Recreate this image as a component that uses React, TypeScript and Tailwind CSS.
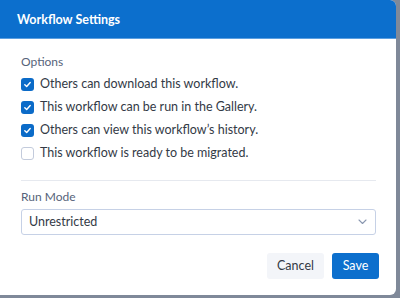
import React from "react";

const Check = ({ checked }: { checked: boolean }) =>
  checked ? (
    <span className="w-[13px] h-[13px] rounded-[3px] bg-[#0b6bc8] flex items-center justify-center shrink-0">
      <svg width="9" height="9" viewBox="0 0 10 10" fill="none">
        <path d="M2 5.2 L4.1 7.2 L8 2.8" stroke="white" strokeWidth="1.6" strokeLinecap="round" strokeLinejoin="round" />
      </svg>
    </span>
  ) : (
    <span className="w-[13px] h-[13px] rounded-[3px] border border-[#c3cbdc] bg-white shrink-0" />
  );

export default function App() {
  const items: [string, boolean][] = [
    ["Others can download this workflow.", true],
    ["This workflow can be run in the Gallery.", true],
    ["Others can view this workflow\u2019s history.", true],
    ["This workflow is ready to be migrated.", false],
  ];
  return (
    <div className="w-[400px] h-[298px] bg-[#7f8999] overflow-hidden" style={{ fontFamily: "Lato, 'Noto Sans', sans-serif" }}>
      <div className="w-[396px] h-[295px] bg-white rounded-r-[6px] overflow-hidden flex flex-col">
        <div className="h-[39px] bg-[#0c6fcd] border-b border-[#5c9fe0] flex items-center pl-[17px] pt-[2px] shrink-0">
          <span className="text-white font-bold text-[12.5px]">Workflow Settings</span>
        </div>
        <div className="px-[21px] pt-[14px] pr-[20px] flex flex-col">
          <div className="text-[#56637a] text-[12px] leading-[18px]">Options</div>
          <div className="flex flex-col gap-[5px] mt-[4px]">
            {items.map(([t, c]) => (
              <div key={t} className="flex items-center gap-[6px] h-[18px]">
                <Check checked={c} />
                <span className="text-[#333a46] text-[12.5px] leading-[18px]">{t}</span>
              </div>
            ))}
          </div>
          <div className="h-px bg-[#e6e9ef] mt-[18px]" />
          <div className="text-[#56637a] text-[12px] leading-[18px] mt-[7px]">Run Mode</div>
          <div className="mt-[3px] h-[26px] border border-[#c6d1e6] rounded-[3px] flex items-center justify-between pl-[7px] pr-[8px]">
            <span className="text-[#333a46] text-[12.5px]">Unrestricted</span>
            <svg width="9" height="6" viewBox="0 0 9 6" fill="none">
              <path d="M1 1 L4.5 4.5 L8 1" stroke="#8a97b0" strokeWidth="1.1" strokeLinecap="round" strokeLinejoin="round" />
            </svg>
          </div>
          <div className="flex justify-end gap-[8px] mt-[18px]">
            <button className="h-[26px] w-[57px] rounded-[3px] bg-[#f3f5f9] text-[#333a46] text-[12.5px]">Cancel</button>
            <button className="h-[26px] w-[47px] rounded-[3px] bg-[#0c6fcd] text-white text-[12.5px] mr-[-3px]">Save</button>
          </div>
        </div>
      </div>
    </div>
  );
}
